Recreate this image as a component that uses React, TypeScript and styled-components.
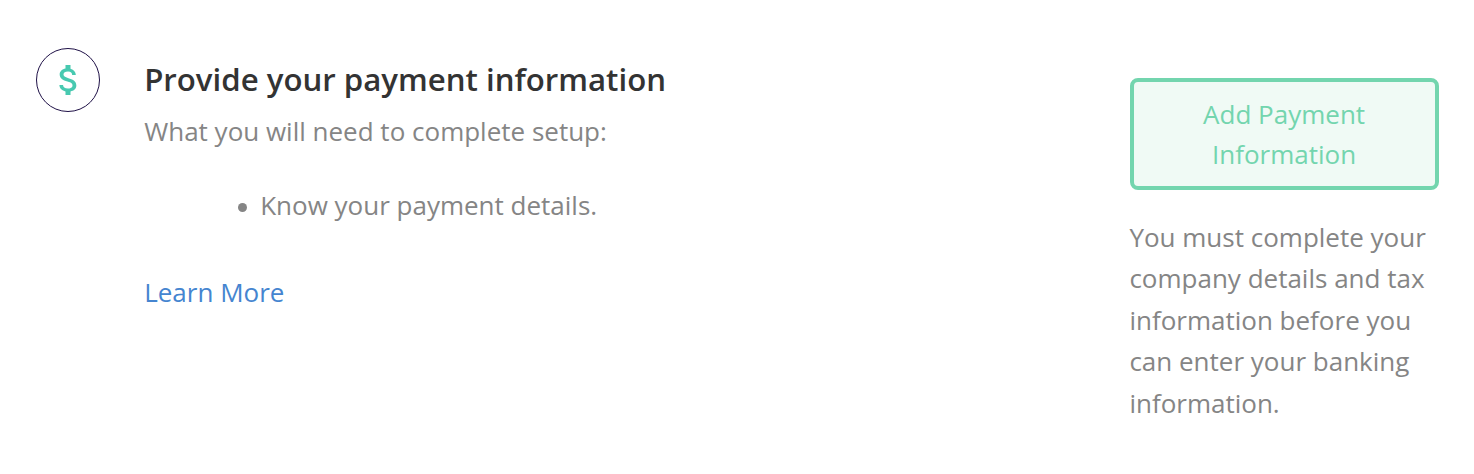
import React from "react";
import styled, { createGlobalStyle } from "styled-components";

const GlobalStyle = createGlobalStyle`
  * { box-sizing: border-box; }
  body {
    margin: 0;
    background: #ffffff;
    color: #858585;
    font-family: "Open Sans", sans-serif;
    font-size: 26px;
    -webkit-font-smoothing: antialiased;
  }
`;

const Step = styled.section`
  display: flex;
  align-items: flex-start;
  height: 474px;
  padding: 48px 35px 0 36px;
`;

const IconBadge = styled.div`
  display: flex;
  align-items: center;
  justify-content: center;
  flex: none;
  width: 64px;
  height: 64px;
  border: 1px solid #1f1147;
  border-radius: 50%;
`;

const DollarIcon = styled.svg`
  display: block;
  width: 40px;
  height: 40px;
  fill: #48c9b0;
`;

const Details = styled.div`
  flex: 1;
  padding: 7px 0 0 44.2px;
`;

const Title = styled.h2`
  margin: 0;
  color: #333333;
  font-size: 31.2px;
  font-weight: 600;
  line-height: 48px;
`;

const Text = styled.p`
  margin: 8px 0 0;
  line-height: 40px;
`;

const Requirements = styled.ul`
  margin: 34px 0 0;
  padding: 0 0 0 93.8px;
  line-height: 40px;
  list-style: none;
`;

const Requirement = styled.li`
  display: flex;
  align-items: center;

  &::before {
    content: "";
    flex: none;
    width: 9px;
    height: 9px;
    margin: 4px 13.2px 0 0;
    border-radius: 50%;
    background: currentColor;
  }
`;

const LearnMore = styled.a`
  display: inline-block;
  margin-top: 47px;
  color: #4585d0;
  line-height: 40px;
  text-decoration: none;
`;

const Actions = styled.aside`
  flex: none;
  width: 309px;
  margin-top: 30px;
`;

const PaymentButton = styled.button`
  display: block;
  width: 100%;
  height: 112px;
  padding: 0 48.8px 0 48px;
  border: 4px solid #73d5ae;
  border-radius: 8px;
  background: #f0faf5;
  color: #73d5ae;
  font: inherit;
  line-height: 40px;
`;

const Note = styled.p`
  margin: 26.8px 0 0 -0.6px;
  line-height: 41.5px;
`;

export default function App() {
  return (
    <>
      <GlobalStyle />
      <Step>
        <IconBadge>
          <DollarIcon viewBox="-0.5 0 24 24" aria-hidden="true">
            <path d="M11.8 10.9c-2.27-.59-3-1.2-3-2.15 0-1.09 1.01-1.85 2.7-1.85 1.78 0 2.44.85 2.5 2.1h2.21c-.07-1.72-1.12-3.3-3.21-3.81V3h-3v2.16c-1.94.42-3.5 1.68-3.5 3.61 0 2.31 1.91 3.46 4.7 4.13 2.5.6 3 1.48 3 2.41 0 .69-.49 1.79-2.7 1.79-2.06 0-2.87-.92-2.98-2.1h-2.2c.12 2.19 1.76 3.42 3.68 3.83V21h3v-2.15c1.95-.37 3.5-1.5 3.5-3.55 0-2.84-2.43-3.81-4.7-4.4z" />
          </DollarIcon>
        </IconBadge>
        <Details>
          <Title>Provide your payment information</Title>
          <Text>What you will need to complete setup:</Text>
          <Requirements>
            <Requirement>Know your payment details.</Requirement>
          </Requirements>
          <LearnMore href="#">Learn More</LearnMore>
        </Details>
        <Actions>
          <PaymentButton type="button">Add Payment Information</PaymentButton>
          <Note>
            You must complete your company details and tax information before you can enter your banking information.
          </Note>
        </Actions>
      </Step>
    </>
  );
}
